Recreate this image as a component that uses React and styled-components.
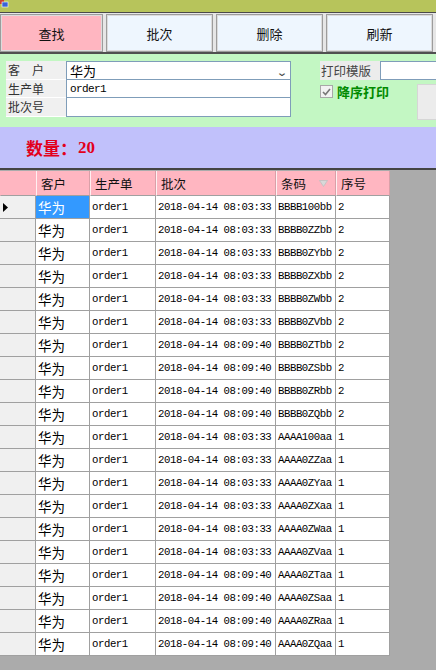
import React from 'react';
import styled, { createGlobalStyle } from 'styled-components';

const GlobalStyle = createGlobalStyle`
  html, body {
    margin: 0;
    padding: 0;
    background: #ababab;
  }
  body {
    font-family: "Noto Sans CJK SC", "Liberation Sans", sans-serif;
  }
`;

const Screen = styled.div`
  width: 436px;
  height: 670px;
  overflow: hidden;
  display: flex;
  flex-direction: column;
  background: #ababab;
`;

const TitleStrip = styled.div`
  height: 12px;
  background: #b7c45b;
  border-bottom: 1px solid #4a4a4a;
  display: flex;
  align-items: flex-start;
`;

const ButtonBar = styled.div`
  display: grid;
  grid-template-columns: 103px 107px 107px 107px;
  column-gap: 3px;
  height: 38px;
  padding-top: 1px;
  background: #e6e6e6;
  border-bottom: 2px solid #505050;
`;

const ToolButton = styled.button`
  border: 1px solid #9c9c9c;
  box-shadow: inset 0 0 0 1px #dcdcdc;
  background: ${p => (p.$active ? '#ffb6c1' : '#eef6fe')};
  font-family: "Noto Sans CJK SC", sans-serif;
  font-size: 13px;
  color: #111;
  padding: 0;
  margin: 0;
  height: 38px;
`;

const FormPanel = styled.div`
  height: 73px;
  background: #c3f7c3;
  display: flex;
  padding: 7px 0 0 6px;
  box-sizing: border-box;
`;

const FieldGrid = styled.div`
  display: grid;
  grid-template-columns: 60px 225px;
  grid-template-rows: 19px 18px 19px;
`;

const FieldLabel = styled.div`
  background: #f0f0f0;
  border-bottom: 1px solid #ffffff;
  font-size: 12px;
  color: #333;
  line-height: 18px;
  padding-left: 2px;
  white-space: pre;
`;

const FieldBox = styled.div`
  background: #fff;
  border: 1px solid #7f9db9;
  border-top-width: ${p => (p.$first ? '1px' : '0')};
  display: flex;
  align-items: center;
  justify-content: space-between;
  padding: 0 4px 0 3px;
  font-family: ${p => (p.$mono ? '"Liberation Mono", monospace' : '"Noto Sans CJK SC", sans-serif')};
  font-size: ${p => (p.$mono ? '11px' : '13px')};
  letter-spacing: ${p => (p.$mono ? '-0.6px' : '0')};
  color: #000;
`;

const Caret = styled.span`
  font-size: 11px;
  color: #444;
  transform: scaleX(1.3);
`;

const PrintGroup = styled.div`
  margin-left: 29px;
  display: grid;
  grid-template-columns: 60px 1fr;
  grid-template-rows: 19px 38px;
  flex: 1;
`;

const PrintLabel = styled.div`
  background: #ececec;
  font-size: 12.5px;
  color: #444;
  line-height: 19px;
  padding-left: 1px;
`;

const PrintInput = styled.div`
  background: #fff;
  border: 1px solid #7f9db9;
  border-right: none;
`;

const CheckRow = styled.div`
  grid-column: 1 / 3;
  display: flex;
  align-items: flex-start;
  padding-top: 5px;
`;

const CheckBox = styled.span`
  width: 11px;
  height: 11px;
  border: 1px solid #a8a8a8;
  background: #f2f2f2;
  display: inline-flex;
  align-items: center;
  justify-content: center;
`;

const CheckText = styled.span`
  margin-left: 4px;
  font-size: 13px;
  font-weight: bold;
  color: #008a00;
  line-height: 13px;
`;

const SideButton = styled.div`
  margin-left: auto;
  margin-top: -1px;
  width: 18px;
  height: 34px;
  background: #ececec;
  border: 1px solid #d6d6d6;
  border-right: none;
`;

const CountPanel = styled.div`
  height: 41px;
  background: #c1c1fb;
  display: flex;
  align-items: center;
  padding-left: 26px;
  font-size: 17px;
  font-weight: bold;
  color: #e3001b;
  border-bottom: 2px solid #444;
`;

const CountValue = styled.span`
  font-family: "Liberation Serif", serif;
  font-size: 17px;
  margin-left: 1px;
`;

/* data grid: row header + five columns, header row a little taller */
const Grid = styled.div`
  display: grid;
  grid-template-columns: 36px 54px 66px 120px 60px 54px;
  grid-template-rows: 25px;
  grid-auto-rows: 23px;
  width: 390px;
  margin-top: 1px;
`;

const HeadCell = styled.div`
  background: #ffb6c1;
  border-right: 1px solid ${p => (p.$corner ? '#ffb6c1' : '#d9a0a8')};
  border-left: 1px solid ${p => (p.$corner ? '#ffb6c1' : '#fff0f2')};
  border-bottom: 1px solid #a0a0a0;
  font-size: 12.5px;
  color: #111;
  display: flex;
  align-items: center;
  justify-content: space-between;
  padding: 0 4px 0 4px;
  box-sizing: border-box;
`;

const SortMark = styled.svg`
  width: 9px;
  height: 7px;
  margin-right: 3px;
`;

const RowHead = styled.div`
  background: #f0f0f0;
  border-right: 1px solid #a0a0a0;
  border-bottom: 1px solid #a0a0a0;
  display: flex;
  align-items: center;
  padding-left: 3px;
`;

const Cell = styled.div`
  background: ${p => (p.$selected ? '#3399ff' : '#fff')};
  color: ${p => (p.$selected ? '#fff' : '#000')};
  border-right: 1px solid #a0a0a0;
  border-bottom: 1px solid #a0a0a0;
  display: flex;
  align-items: center;
  padding-left: 2px;
  overflow: hidden;
  white-space: nowrap;
  font-family: ${p => (p.$cjk ? '"Noto Sans CJK SC", sans-serif' : '"Liberation Mono", monospace')};
  font-size: ${p => (p.$cjk ? '13.5px' : '10.7px')};
  letter-spacing: ${p => (p.$cjk ? '0' : '-0.45px')};
`;

const AppIcon = () => (
  <svg width="9" height="8" viewBox="0 0 9 8">
    <rect x="0" y="0" width="4" height="4" fill="#d04030" />
    <rect x="2" y="2" width="6" height="5" fill="#3a62d8" stroke="#fff" strokeWidth="0.6" />
  </svg>
);

const rows = [
  ['08:03:33', 'BBBB100bb', 2],
  ['08:03:33', 'BBBB0ZZbb', 2],
  ['08:03:33', 'BBBB0ZYbb', 2],
  ['08:03:33', 'BBBB0ZXbb', 2],
  ['08:03:33', 'BBBB0ZWbb', 2],
  ['08:03:33', 'BBBB0ZVbb', 2],
  ['08:09:40', 'BBBB0ZTbb', 2],
  ['08:09:40', 'BBBB0ZSbb', 2],
  ['08:09:40', 'BBBB0ZRbb', 2],
  ['08:09:40', 'BBBB0ZQbb', 2],
  ['08:03:33', 'AAAA100aa', 1],
  ['08:03:33', 'AAAA0ZZaa', 1],
  ['08:03:33', 'AAAA0ZYaa', 1],
  ['08:03:33', 'AAAA0ZXaa', 1],
  ['08:03:33', 'AAAA0ZWaa', 1],
  ['08:03:33', 'AAAA0ZVaa', 1],
  ['08:09:40', 'AAAA0ZTaa', 1],
  ['08:09:40', 'AAAA0ZSaa', 1],
  ['08:09:40', 'AAAA0ZRaa', 1],
  ['08:09:40', 'AAAA0ZQaa', 1],
];

const buttons = ['查找', '批次', '删除', '刷新'];

export default function App() {
  return (
    <Screen>
      <GlobalStyle />
      <TitleStrip>
        <AppIcon />
      </TitleStrip>

      <ButtonBar>
        {buttons.map((b, i) => (
          <ToolButton key={b} $active={i === 0}>{b}</ToolButton>
        ))}
      </ButtonBar>

      <FormPanel>
        <FieldGrid>
          <FieldLabel>{'客　户'}</FieldLabel>
          <FieldBox $first>
            <span>华为</span>
            <Caret>⌄</Caret>
          </FieldBox>
          <FieldLabel>生产单</FieldLabel>
          <FieldBox $mono>order1</FieldBox>
          <FieldLabel>批次号</FieldLabel>
          <FieldBox />
        </FieldGrid>

        <PrintGroup>
          <PrintLabel>打印模版</PrintLabel>
          <PrintInput />
          <CheckRow>
            <CheckBox>
              <svg width="9" height="8" viewBox="0 0 9 8">
                <path d="M1 4 L3.5 6.5 L8 1" fill="none" stroke="#777" strokeWidth="1.6" />
              </svg>
            </CheckBox>
            <CheckText>降序打印</CheckText>
            <SideButton />
          </CheckRow>
        </PrintGroup>
      </FormPanel>

      <CountPanel>
        数量：<CountValue>20</CountValue>
      </CountPanel>

      <Grid>
        <HeadCell $corner />
        <HeadCell>客户</HeadCell>
        <HeadCell>生产单</HeadCell>
        <HeadCell>批次</HeadCell>
        <HeadCell>
          条码
          <SortMark viewBox="0 0 9 7">
            <polygon points="0.5,0.5 8.5,0.5 4.5,6.5" fill="#d8d8d8" stroke="#c0c0c0" strokeWidth="0.8" />
          </SortMark>
        </HeadCell>
        <HeadCell>序号</HeadCell>

        {rows.map(([time, code, seq], i) => (
          <React.Fragment key={code}>
            <RowHead>
              {i === 0 && (
                <svg width="5" height="9" viewBox="0 0 5 9">
                  <polygon points="0,0 5,4.5 0,9" fill="#000" />
                </svg>
              )}
            </RowHead>
            <Cell $cjk $selected={i === 0}>华为</Cell>
            <Cell>order1</Cell>
            <Cell>2018-04-14 {time}</Cell>
            <Cell>{code}</Cell>
            <Cell>{seq}</Cell>
          </React.Fragment>
        ))}
      </Grid>
    </Screen>
  );
}
